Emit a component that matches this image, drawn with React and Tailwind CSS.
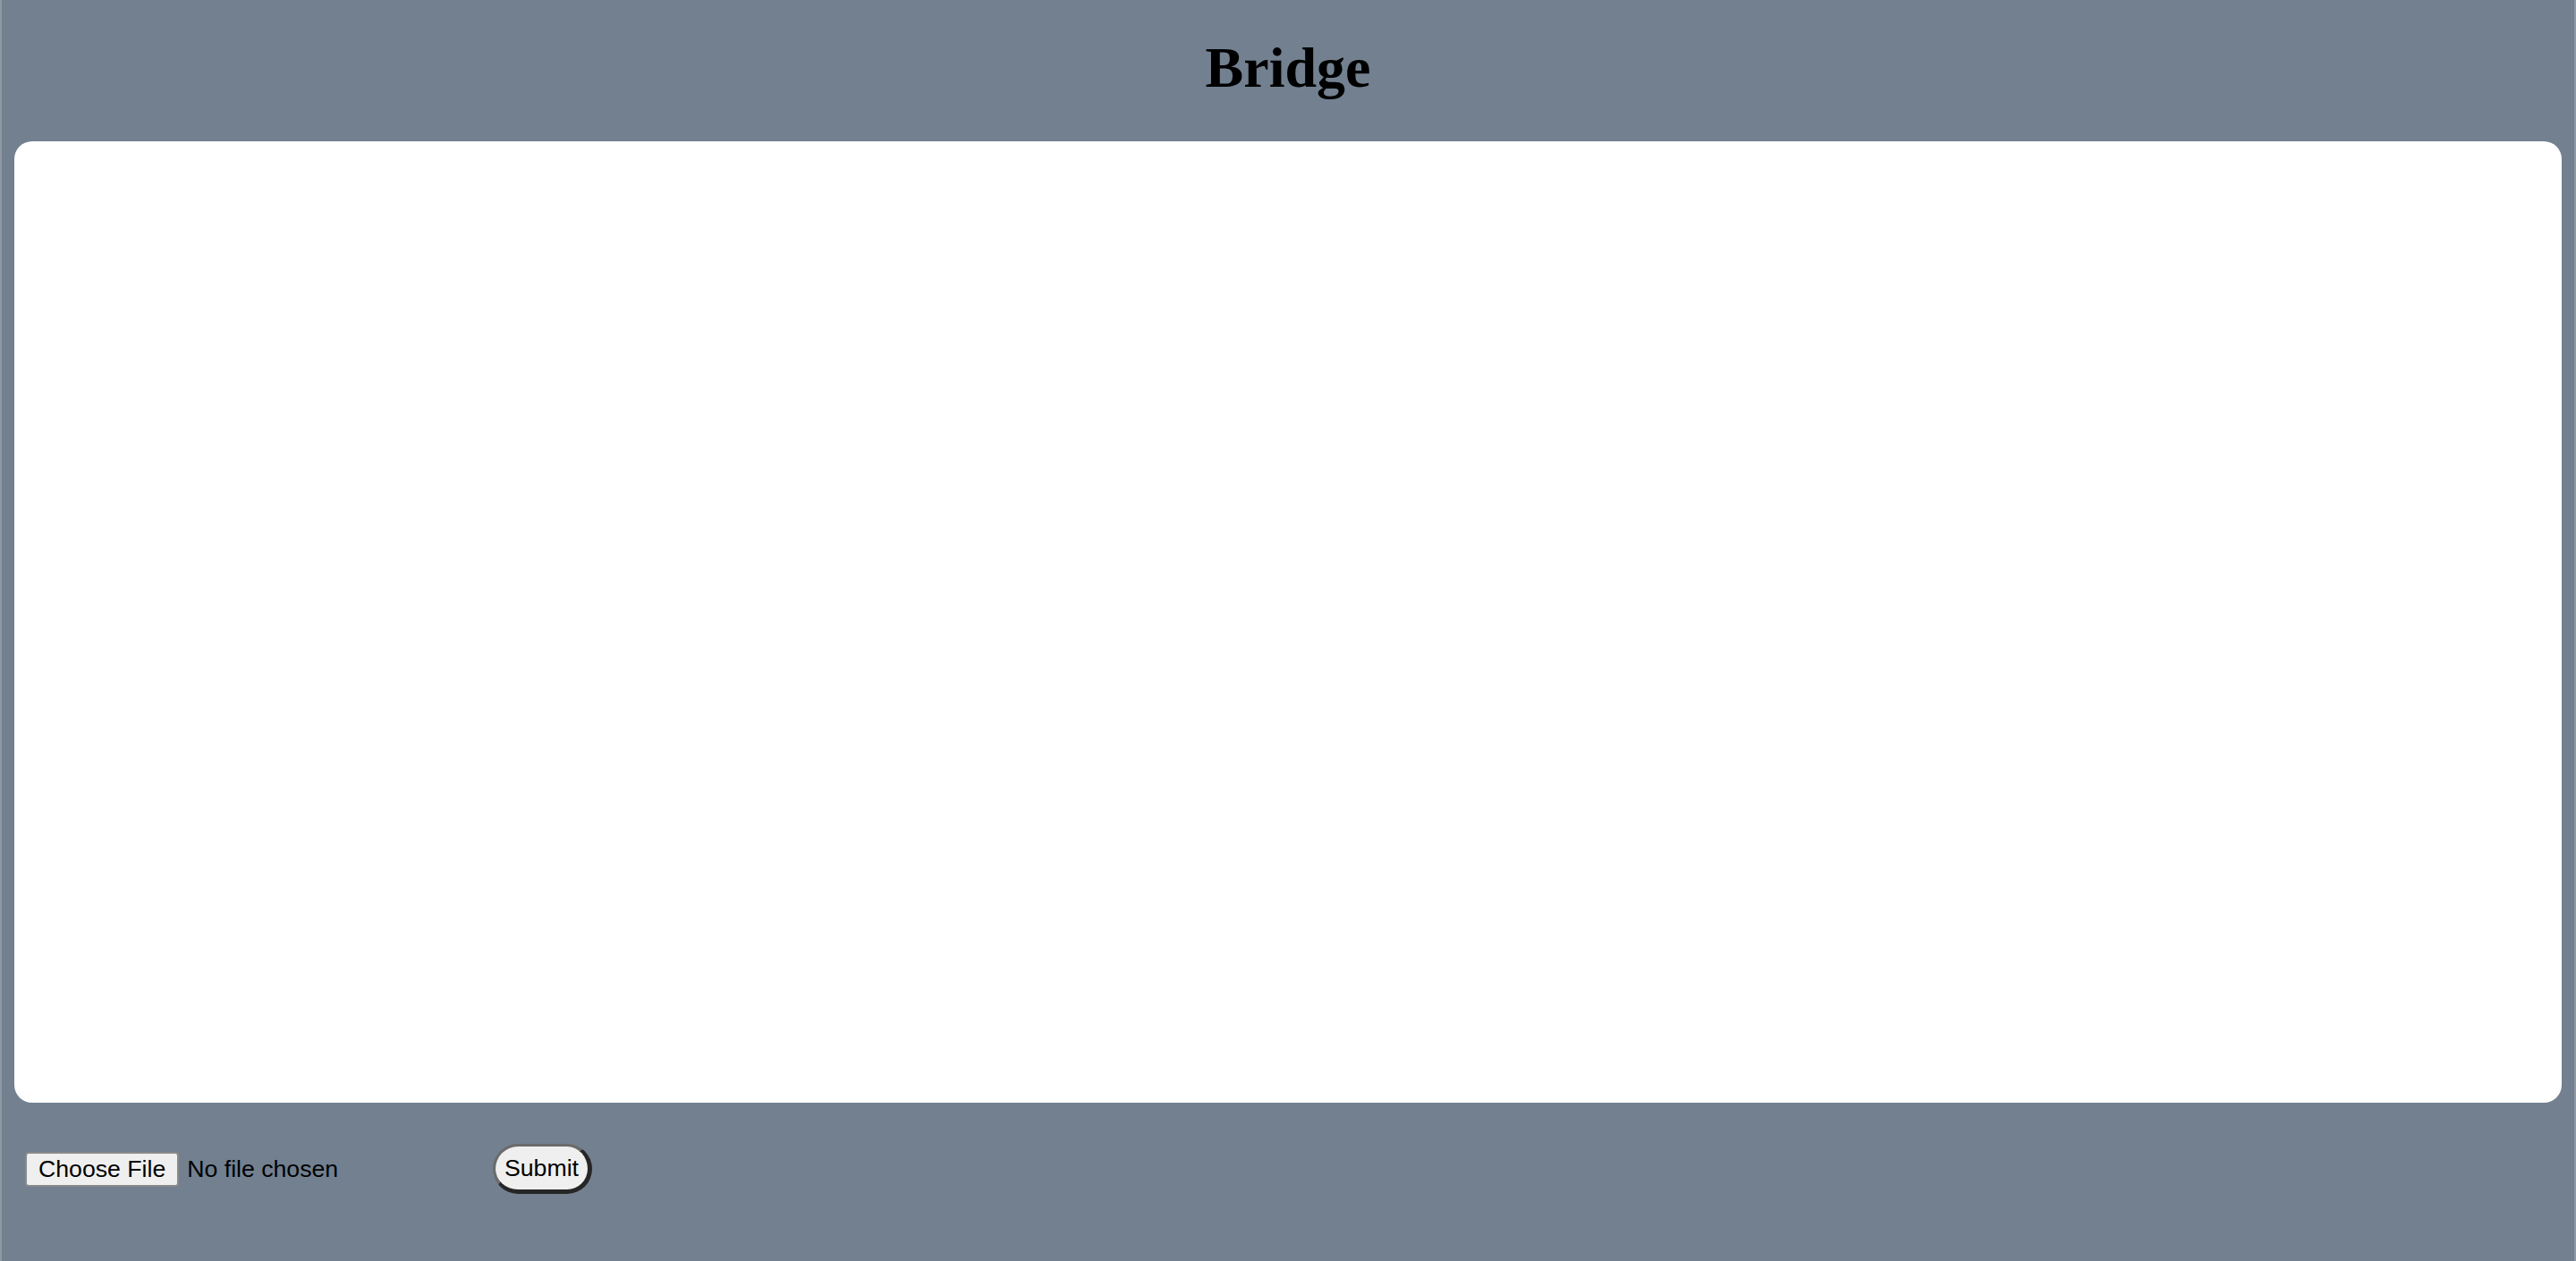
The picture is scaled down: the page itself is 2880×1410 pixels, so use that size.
export default function App() {
  return (
    <div className="flex min-h-screen flex-col border-x-2 border-[#8f99a5] bg-[#728090] px-[14px] font-['Liberation_Sans',Arial,sans-serif] text-black">
      <h1 className="pt-[44px] text-center font-['Liberation_Serif','Times_New_Roman',serif] text-[64px] font-bold leading-[64px]">
        Bridge
      </h1>

      <section className="mt-[50px] h-[1075px] w-full rounded-[20px] bg-white" />

      <form className="mt-[46px] flex items-center" onSubmit={(e) => e.preventDefault()}>
        <div className="ml-[12px] flex w-[523px] items-center">
          <button
            type="button"
            className="h-[39px] rounded-[4px] border-2 border-[#8a8a8a] bg-[#efefef] px-[13px] text-[26.67px] leading-none"
          >
            Choose File
          </button>
          <span className="ml-[9px] text-[26.67px] leading-none">No file chosen</span>
        </div>
        <button
          type="submit"
          className="h-[56px] rounded-full border-solid border-t-[3px] border-l-[3px] border-r-[5px] border-b-[5px] border-t-[#6b6b6b] border-l-[#6b6b6b] border-r-[#262626] border-b-[#262626] bg-[#efefef] px-[10px] text-[26.67px] leading-none"
        >
          Submit
        </button>
      </form>
    </div>
  );
}
